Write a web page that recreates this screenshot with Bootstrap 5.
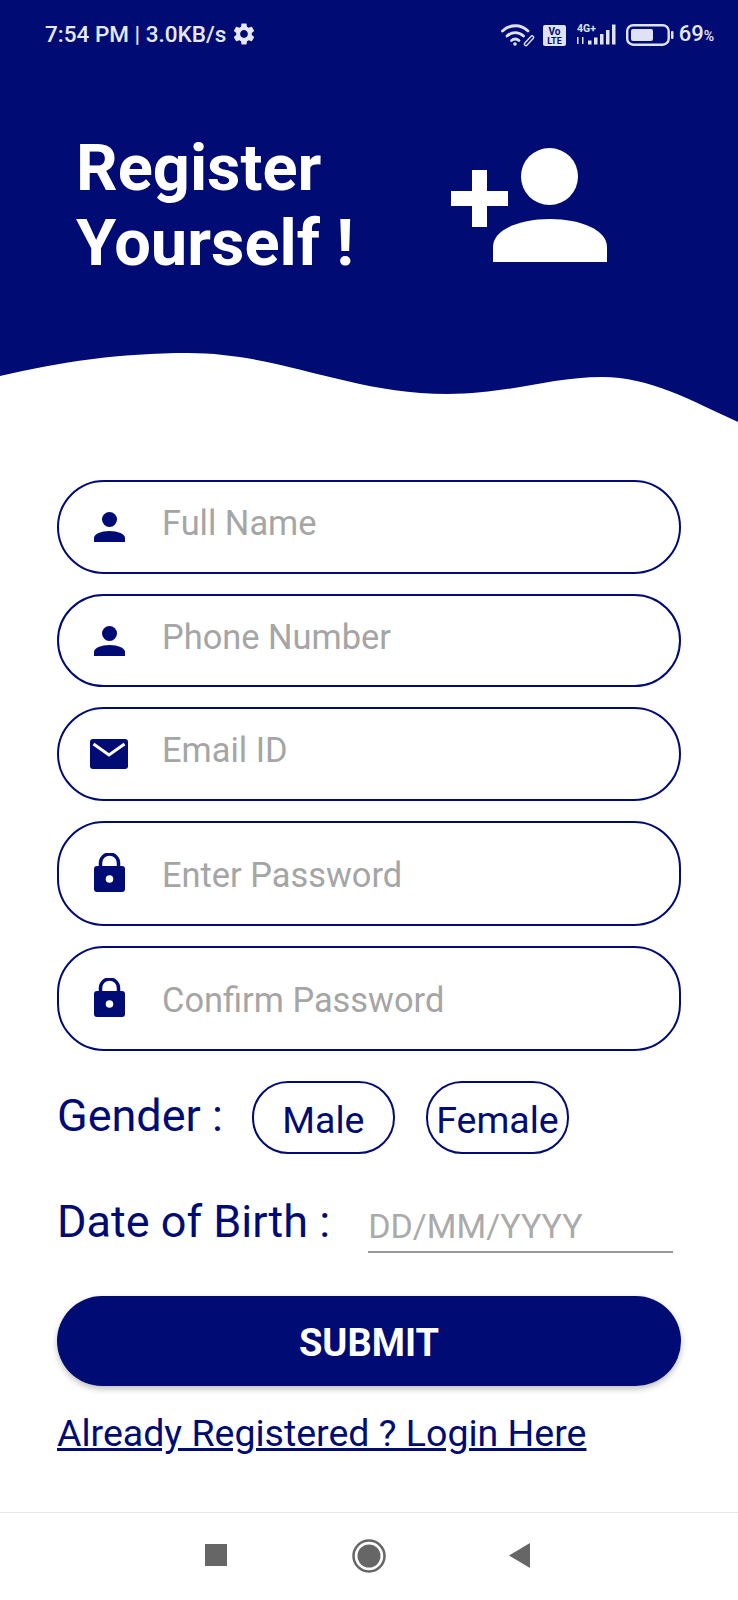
<!DOCTYPE html>
<html lang="en">
<head>
<meta charset="utf-8">
<title>Register Yourself</title>
<link rel="stylesheet" href="https://cdn.jsdelivr.net/npm/bootstrap@5.3.0/dist/css/bootstrap.min.css">
<style>
:root { --navy: #000b73; }
html, body { margin: 0; background: #fff; }
body { font-family: Roboto, "Liberation Sans", sans-serif; width: 738px; height: 1600px; overflow: hidden; }
.app-page { height: 1600px; }
.hero { background: var(--navy); color: #fff; height: 425px; }
.status-line { height: 66px; padding: 23px 24px 0 45px; color: #e6e8f5; font-size: 22.5px; font-weight: 500; line-height: 22px; }
.status-left { margin-top: -2px; }
.status-gear { margin: 0 0 0 5px; }
.status-pct { font-size: 22px; line-height: 22px; font-weight: 500; margin-left: 5px; }
.status-pct small { font-size: 14px; }
.hero-row { padding: 65px 0 0 76px; height: 215px; }
.hero-title { font-size: 65px; font-weight: 700; line-height: 75px; margin: 0; width: 375px; }
.hero-icon { margin-top: 17px; display: block; }
.wave { display: block; width: 738px; height: 75px; margin-top: 69px; }
.form-area { padding: 55px 57px 0; }
.field-stack { gap: 20px; }
.pill-field { border: 2px solid var(--navy); border-radius: 47px; background: #fff; }
.h-94 { height: 94px; } .h-93 { height: 93px; } .h-105 { height: 105px; }
.field-icon { width: 44px; margin-left: 28px; flex: none; }
.lock-lift { margin-bottom: 2px; }
.pill-input.form-control { border: 0; background: transparent; box-shadow: none; font-size: 34.4px; line-height: 40px; padding: 0; margin-left: 31px; color: #333; height: 40px; border-radius: 0; }
.pill-input::placeholder { color: #a5a5a5; opacity: 1; }
.shift-up { margin-bottom: 8px; }
.shift-down { margin-top: 3px; }
.gender-row { margin-top: 30px; height: 73px; gap: 31px; }
.big-label { color: var(--navy); font-size: 45px; line-height: 50px; margin: 0 0 4px; }
.gender-row .big-label { margin-right: -2px; }
.gender-btn.btn { color: var(--navy); background: #fff; border: 2px solid var(--navy); border-radius: 36px; height: 73px; width: 143px; font-size: 37.5px; line-height: 44px; padding: 4px 0 0; }
.dob-row { margin-top: 41px; }
.dob-row .big-label { line-height: 54px; }
.dob-input.form-control { border: 0; border-bottom: 2px solid #999; border-radius: 0; background: transparent; box-shadow: none; width: 305px; height: 44px; font-size: 34px; padding: 0 0 7px; margin-left: 38px; }
.dob-input::placeholder { color: #aaa; opacity: 1; }
.submit-btn.btn { display: block; width: 100%; height: 90px; margin-top: 43px; padding: 4px 0 0; background: var(--navy); color: #fff; border: 0; border-radius: 45px; font-size: 38px; font-weight: 700; box-shadow: 0 3px 6px rgba(0,0,0,.25); }
.login-link { display: inline-block; color: var(--navy); font-size: 37.5px; line-height: 44px; margin-top: 25px; }
.nav-strip { height: 88px; border-top: 1px solid #e6e6e6; }
.nav-strip svg { display: block; }
</style>
</head>
<body>
<div class="app-page d-flex flex-column">
  <header class="hero">
    <div class="status-line d-flex justify-content-between align-items-start">
      <div class="status-left d-flex align-items-center">
        <span>7:54 PM | 3.0KB/s</span>
        <svg class="status-gear" width="26" height="26" viewBox="0 0 24 24" fill="#e6e8f5"><path d="M19.14 12.94c.04-.3.06-.61.06-.94 0-.32-.02-.64-.07-.94l2.03-1.58c.18-.14.23-.41.12-.61l-1.92-3.32c-.12-.22-.37-.29-.59-.22l-2.39.96c-.5-.38-1.03-.7-1.62-.94l-.36-2.54c-.04-.24-.24-.41-.48-.41h-3.84c-.24 0-.43.17-.47.41l-.36 2.54c-.59.24-1.13.57-1.62.94l-2.39-.96c-.22-.08-.47 0-.59.22L2.74 8.87c-.12.21-.08.47.12.61l2.03 1.58c-.05.3-.09.63-.09.94s.02.64.07.94l-2.03 1.58c-.18.14-.23.41-.12.61l1.92 3.32c.12.22.37.29.59.22l2.39-.96c.5.38 1.03.7 1.62.94l.36 2.54c.05.24.24.41.48.41h3.84c.24 0 .44-.17.47-.41l.36-2.54c.59-.24 1.13-.56 1.62-.94l2.39.96c.22.08.47 0 .59-.22l1.92-3.32c.12-.22.07-.47-.12-.61l-2.01-1.58zM12 15.6c-1.98 0-3.6-1.62-3.6-3.6s1.62-3.6 3.6-3.6 3.6 1.62 3.6 3.6-1.62 3.6-3.6 3.6z"/></svg>
      </div>
      <div class="d-flex align-items-center">
        <svg width="34" height="24" viewBox="0 0 34 24" fill="none" stroke="#dfe2f2" stroke-width="2.8" stroke-linecap="round">
          <path d="M1.5 8C9 1 20 1 27 8"/><path d="M6 13c5-4.500 11.500-4.500 16.500 0"/><path d="M10.500 17.500c2.500-2 5-2 7.500 0"/>
          <circle cx="14" cy="21" r="1.800" fill="#dfe2f2" stroke="none"/>
          <path d="M25 21l6-6.500" stroke-width="4.500"/><path d="M25 21l6-6.500" stroke="#000b73" stroke-width="1.800"/>
        </svg>
        <svg class="ms-2" width="23" height="21" viewBox="0 0 23 21"><rect width="23" height="21" rx="2" fill="#dfe2f2"/><text x="11.500" y="9.500" font-family="Roboto, sans-serif" font-size="10" font-weight="700" fill="#000b73" text-anchor="middle">Vo</text><text x="11.500" y="18.500" font-family="Roboto, sans-serif" font-size="9" font-weight="700" fill="#000b73" text-anchor="middle">LTE</text></svg>
        <svg class="ms-2" width="52" height="24" viewBox="0 0 52 24" fill="#dfe2f2"><text x="3" y="8.500" font-family="Roboto, sans-serif" font-size="10.500" font-weight="700">4G+</text><rect x="3" y="14" width="1.500" height="7"/><rect x="8" y="14" width="1.500" height="7"/><rect x="14" y="17.500" width="3.500" height="4"/><rect x="20" y="14.500" width="3.500" height="7"/><rect x="26" y="11" width="3.500" height="10.500"/><rect x="32" y="7" width="3.500" height="14.500"/><rect x="38" y="1.500" width="3.500" height="20"/></svg>
        <svg width="48" height="22" viewBox="0 0 48 22"><rect x="1.200" y="1.200" width="41.500" height="19.500" rx="6" fill="none" stroke="#dfe2f2" stroke-width="2.400"/><rect x="5" y="5" width="22" height="12" rx="2" fill="#dfe2f2"/><rect x="45" y="7" width="2.500" height="8" rx="1" fill="#dfe2f2"/></svg>
        <span class="status-pct">69<small>%</small></span>
      </div>
    </div>
    <div class="hero-row d-flex align-items-start">
      <h1 class="hero-title">Register<br>Yourself !</h1>
      <svg class="hero-icon" width="156" height="114" viewBox="0 0 156 114" fill="#fff">
        <rect y="43" width="57" height="15"/><rect x="21" y="22" width="15" height="57"/>
        <circle cx="98.500" cy="28.500" r="28.500"/>
        <path d="M42 114V99C42 82 68 71 99 71S156 82 156 99V114Z"/>
      </svg>
    </div>
    <svg class="wave" viewBox="0 0 738 75" preserveAspectRatio="none"><path fill="#fff" d="M0 26C60 12 120 3 188 3C280 3 350 44 447 44C510 44 550 27 602 27C650 27 690 50 738 72V75H0Z"/></svg>
  </header>
  <main class="form-area">
    <form class="d-flex flex-column">
      <div class="field-stack d-flex flex-column">
        <div class="pill-field h-94 d-flex align-items-center">
          <div class="field-icon d-flex justify-content-center"><svg width="31" height="30" viewBox="0 0 31 30" fill="#000b73"><circle cx="15.500" cy="7.500" r="7.500"/><path d="M0 30V26C0 22 7 19 15.500 19S31 22 31 26V30Z"/></svg></div>
          <input class="form-control pill-input shift-up" type="text" placeholder="Full Name">
        </div>
        <div class="pill-field h-93 d-flex align-items-center">
          <div class="field-icon d-flex justify-content-center"><svg width="31" height="30" viewBox="0 0 31 30" fill="#000b73"><circle cx="15.500" cy="7.500" r="7.500"/><path d="M0 30V26C0 22 7 19 15.500 19S31 22 31 26V30Z"/></svg></div>
          <input class="form-control pill-input shift-up" type="tel" placeholder="Phone Number">
        </div>
        <div class="pill-field h-94 d-flex align-items-center">
          <div class="field-icon d-flex justify-content-center"><svg width="38" height="30" viewBox="0 0 38 30"><rect width="38" height="30" rx="3" fill="#000b73"/><path d="M3.500 5L19 16L34.500 5" fill="none" stroke="#fff" stroke-width="3"/></svg></div>
          <input class="form-control pill-input shift-up" type="email" placeholder="Email ID">
        </div>
        <div class="pill-field h-105 d-flex align-items-center">
          <div class="field-icon d-flex justify-content-center"><svg class="lock-lift" width="31" height="39" viewBox="0 0 31 39" fill="#000b73"><path d="M6.500 15V10a9 9 0 0 1 18 0V15" fill="none" stroke="#000b73" stroke-width="3.500"/><rect y="13" width="31" height="26" rx="3"/><circle cx="15.500" cy="26" r="3.800" fill="#fff"/></svg></div>
          <input class="form-control pill-input shift-down" type="password" placeholder="Enter Password">
        </div>
        <div class="pill-field h-105 d-flex align-items-center">
          <div class="field-icon d-flex justify-content-center"><svg class="lock-lift" width="31" height="39" viewBox="0 0 31 39" fill="#000b73"><path d="M6.500 15V10a9 9 0 0 1 18 0V15" fill="none" stroke="#000b73" stroke-width="3.500"/><rect y="13" width="31" height="26" rx="3"/><circle cx="15.500" cy="26" r="3.800" fill="#fff"/></svg></div>
          <input class="form-control pill-input shift-down" type="password" placeholder="Confirm Password">
        </div>
      </div>
      <div class="gender-row d-flex align-items-center">
        <p class="big-label">Gender :</p>
        <button type="button" class="btn gender-btn">Male</button>
        <button type="button" class="btn gender-btn">Female</button>
      </div>
      <div class="dob-row d-flex align-items-end">
        <p class="big-label">Date of Birth :</p>
        <input class="form-control dob-input" type="text" placeholder="DD/MM/YYYY">
      </div>
      <button type="button" class="btn submit-btn">SUBMIT</button>
      <div><a class="login-link" href="#">Already Registered ? Login Here</a></div>
    </form>
  </main>
  <nav class="nav-strip mt-auto" aria-label="System navigation">
    <svg width="738" height="87" viewBox="0 0 738 87" fill="#666"><rect x="205" y="31" width="22" height="22"/><circle cx="369" cy="43" r="15.500" fill="none" stroke="#666" stroke-width="2.500"/><circle cx="369" cy="43" r="11.500"/><path d="M530 30V55L509 42.500Z"/></svg>
  </nav>
</div>
</body>
</html>
